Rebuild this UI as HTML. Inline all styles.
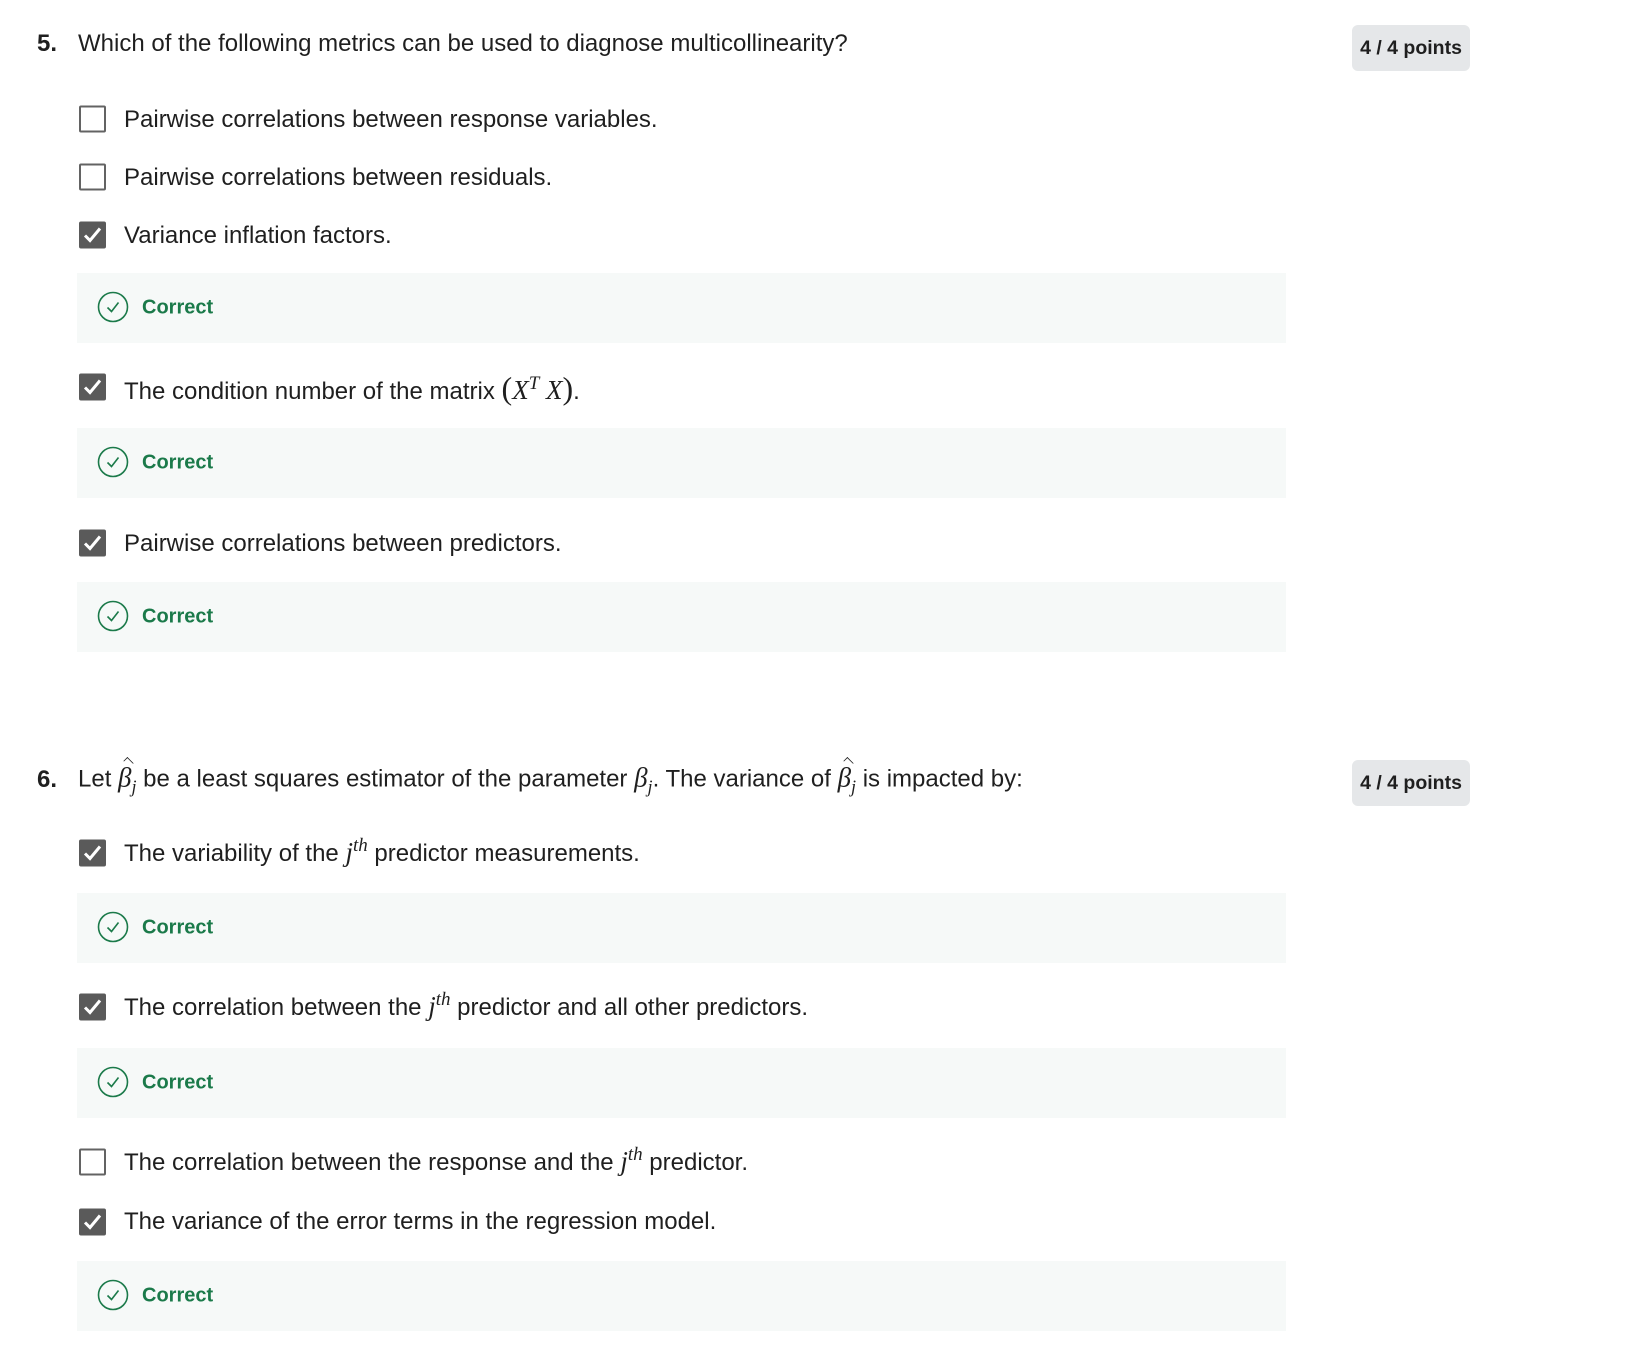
<!DOCTYPE html>
<html><head><meta charset="utf-8"><style>
body{margin:0;width:1642px;height:1368px;background:#fff;position:relative;font-family:"Liberation Sans",sans-serif;color:#1f1f1f;overflow:hidden}
.a{position:absolute;white-space:nowrap;line-height:1}
.q{font-size:24px;transform:translateY(-50%)}
.num{font-weight:bold}
.badge{position:absolute;left:1352px;width:118px;height:46px;background:#e5e7e9;border-radius:6px;font-weight:bold;font-size:19.5px;display:flex;align-items:center;justify-content:center;color:#1f1f1f}
.cb{position:absolute;left:79px;width:23px;height:23px;border:2px solid #636363;border-radius:2px;box-sizing:content-box;transform:translateY(-50%)}
.cb.on{background:#5a5a5a;border-color:#5a5a5a}
.cb.on svg{position:absolute;left:1px;top:1px}
.lbl{left:124px;font-size:24px;transform:translateY(-50%)}
.box{position:absolute;left:77px;width:1209px;height:70px;background:#f6f9f8}
.box svg{position:absolute;left:20px;top:18px}
.cor{position:absolute;left:65px;top:50%;transform:translateY(-50%);color:#1b7a4a;font-weight:bold;font-size:20px}
.m{font-family:"Liberation Serif",serif;font-style:italic;font-size:27px}
sup.m{font-size:19px;vertical-align:10px}
.hat{position:relative;display:inline-block}
.hat::before{content:"";position:absolute;left:5px;top:-6px;width:10px;height:6px;border-top:1.5px solid #1f1f1f;border-left:1.5px solid #1f1f1f;transform:rotate(45deg) scale(.8,.8);transform-origin:center}
</style></head><body>

<div class="a q num" style="left:37px;top:44px">5.</div>
<div class="a q" style="left:78px;top:44px">Which of the following metrics can be used to diagnose multicollinearity?</div>
<div class="badge" style="top:25px">4 / 4 points</div>

<div class="cb" style="top:119px"></div><div class="a lbl" style="top:120px">Pairwise correlations between response variables.</div>
<div class="cb" style="top:177px"></div><div class="a lbl" style="top:178px">Pairwise correlations between residuals.</div>
<div class="cb on" style="top:235px"><svg width="21" height="21" viewBox="0 0 21 21"><path d="M3 11l5 5 10-12" stroke="#fff" stroke-width="3" fill="none"/></svg></div><div class="a lbl" style="top:236px">Variance inflation factors.</div>
<div class="box" style="top:273px"><svg width="32" height="32" viewBox="0 0 32 32"><circle cx="16" cy="16" r="14.5" stroke="#1b7a4a" stroke-width="1.6" fill="none"/><path d="M10.5 16.5l4 4 7-9" stroke="#1b7a4a" stroke-width="1.6" fill="none"/></svg><span class="cor">Correct</span></div>

<div class="cb on" style="top:387px"><svg width="21" height="21" viewBox="0 0 21 21"><path d="M3 11l5 5 10-12" stroke="#fff" stroke-width="3" fill="none"/></svg></div><div class="a lbl" style="top:388px">The condition number of the matrix <span class="m" style="font-style:normal;font-size:32px">(</span><span class="m">X</span><sup class="m">T</sup> <span class="m">X</span><span class="m" style="font-style:normal;font-size:32px">)</span>.</div>
<div class="box" style="top:428px"><svg width="32" height="32" viewBox="0 0 32 32"><circle cx="16" cy="16" r="14.5" stroke="#1b7a4a" stroke-width="1.6" fill="none"/><path d="M10.5 16.5l4 4 7-9" stroke="#1b7a4a" stroke-width="1.6" fill="none"/></svg><span class="cor">Correct</span></div>

<div class="cb on" style="top:543px"><svg width="21" height="21" viewBox="0 0 21 21"><path d="M3 11l5 5 10-12" stroke="#fff" stroke-width="3" fill="none"/></svg></div><div class="a lbl" style="top:544px">Pairwise correlations between predictors.</div>
<div class="box" style="top:582px"><svg width="32" height="32" viewBox="0 0 32 32"><circle cx="16" cy="16" r="14.5" stroke="#1b7a4a" stroke-width="1.6" fill="none"/><path d="M10.5 16.5l4 4 7-9" stroke="#1b7a4a" stroke-width="1.6" fill="none"/></svg><span class="cor">Correct</span></div>

<div class="a q num" style="left:37px;top:780px">6.</div>
<div class="a q" style="left:78px;top:780px">Let <span class="m hat">β</span><sub class="m" style="font-size:18px">j</sub> be a least squares estimator of the parameter <span class="m">β</span><sub class="m" style="font-size:18px">j</sub>. The variance of <span class="m hat">β</span><sub class="m" style="font-size:18px">j</sub> is impacted by:</div>
<div class="badge" style="top:760px">4 / 4 points</div>

<div class="cb on" style="top:853px"><svg width="21" height="21" viewBox="0 0 21 21"><path d="M3 11l5 5 10-12" stroke="#fff" stroke-width="3" fill="none"/></svg></div><div class="a lbl" style="top:851px">The variability of the <span class="m">j</span><sup class="m">th</sup> predictor measurements.</div>
<div class="box" style="top:893px"><svg width="32" height="32" viewBox="0 0 32 32"><circle cx="16" cy="16" r="14.5" stroke="#1b7a4a" stroke-width="1.6" fill="none"/><path d="M10.5 16.5l4 4 7-9" stroke="#1b7a4a" stroke-width="1.6" fill="none"/></svg><span class="cor">Correct</span></div>

<div class="cb on" style="top:1007px"><svg width="21" height="21" viewBox="0 0 21 21"><path d="M3 11l5 5 10-12" stroke="#fff" stroke-width="3" fill="none"/></svg></div><div class="a lbl" style="top:1005px">The correlation between the <span class="m">j</span><sup class="m">th</sup> predictor and all other predictors.</div>
<div class="box" style="top:1048px"><svg width="32" height="32" viewBox="0 0 32 32"><circle cx="16" cy="16" r="14.5" stroke="#1b7a4a" stroke-width="1.6" fill="none"/><path d="M10.5 16.5l4 4 7-9" stroke="#1b7a4a" stroke-width="1.6" fill="none"/></svg><span class="cor">Correct</span></div>

<div class="cb" style="top:1162px"></div><div class="a lbl" style="top:1160px">The correlation between the response and the <span class="m">j</span><sup class="m">th</sup> predictor.</div>
<div class="cb on" style="top:1222px"><svg width="21" height="21" viewBox="0 0 21 21"><path d="M3 11l5 5 10-12" stroke="#fff" stroke-width="3" fill="none"/></svg></div><div class="a lbl" style="top:1222px">The variance of the error terms in the regression model.</div>
<div class="box" style="top:1261px"><svg width="32" height="32" viewBox="0 0 32 32"><circle cx="16" cy="16" r="14.5" stroke="#1b7a4a" stroke-width="1.6" fill="none"/><path d="M10.5 16.5l4 4 7-9" stroke="#1b7a4a" stroke-width="1.6" fill="none"/></svg><span class="cor">Correct</span></div>

</body></html>
